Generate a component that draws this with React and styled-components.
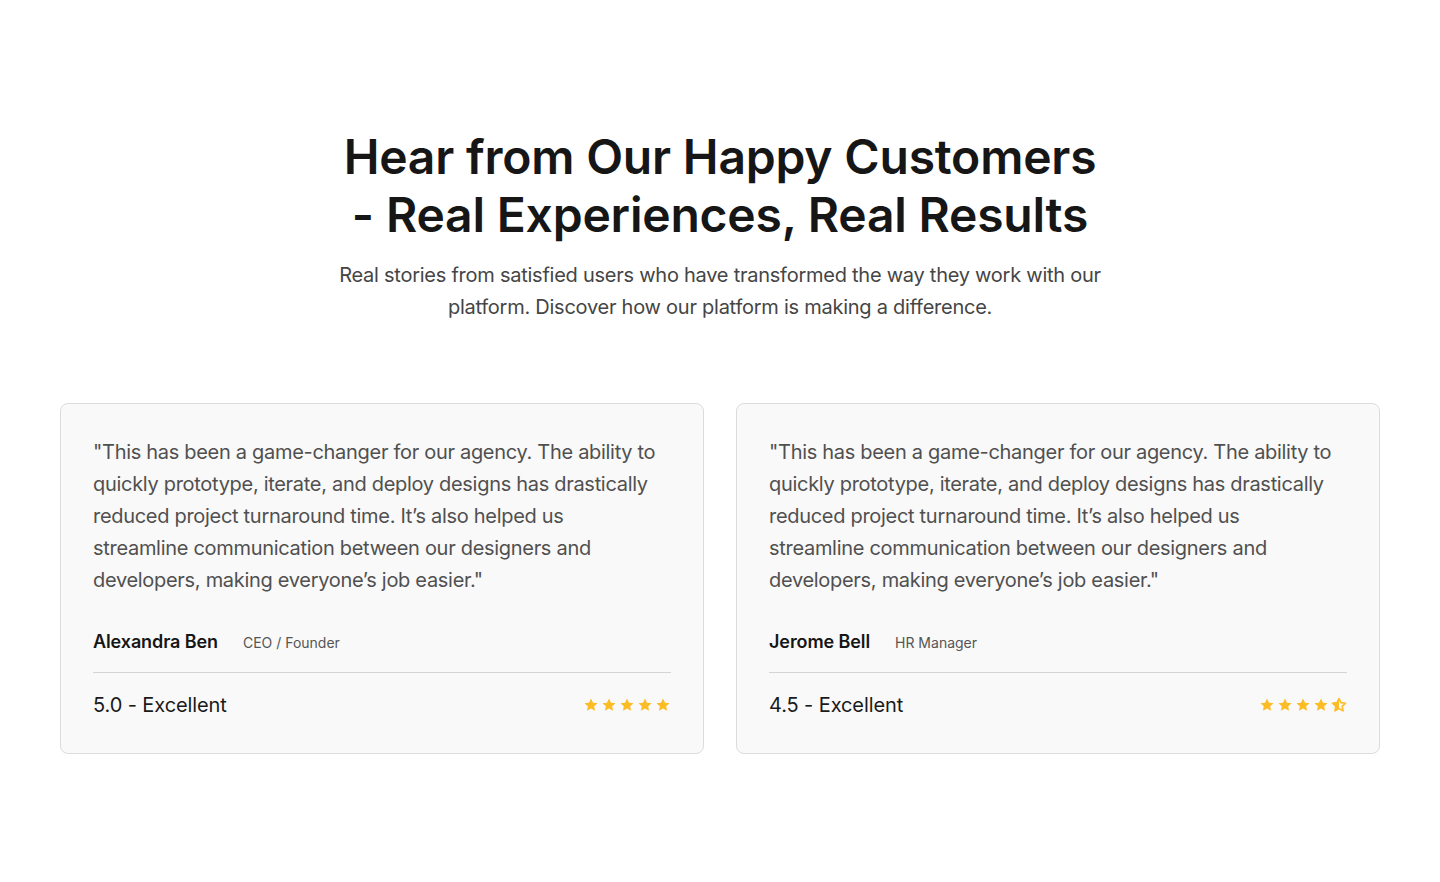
import styled, { createGlobalStyle } from "styled-components";

const GlobalStyle = createGlobalStyle`
    body {
        margin: 0;
        background: #ffffff;
        font-family: Inter, "Noto Sans", sans-serif;
        color: #1a1a1a;
    }
`;

const Section = styled.section`
    display: flex;
    flex-direction: column;
    align-items: center;
    padding: 128px 60px 128px;
`;

const Header = styled.header`
    display: flex;
    flex-direction: column;
    align-items: center;
    gap: 15px;
    text-align: center;
    margin-bottom: 80px;
`;

const Title = styled.h2`
    margin: 0;
    font-size: 48px;
    line-height: 58px;
    font-weight: 600;
    letter-spacing: -0.2px;
    color: #161616;
`;

const Subtitle = styled.p`
    margin: 0;
    font-size: 20px;
    line-height: 32px;
    letter-spacing: -0.25px;
    color: #454545;
`;

const CardGrid = styled.div`
    display: grid;
    grid-template-columns: 1fr 1fr;
    gap: 32px;
    width: 100%;
`;

const Card = styled.article`
    display: flex;
    flex-direction: column;
    padding: 32px;
    background: #f9f9f9;
    border: 1px solid #dcdcdc;
    border-radius: 8px;
`;

const Quote = styled.p`
    max-width: 566px;
    margin: 0 0 32px;
    font-size: 20px;
    line-height: 32px;
    letter-spacing: -0.3px;
    color: #505050;
`;

const Author = styled.div`
    display: flex;
    align-items: baseline;
    gap: 25px;
    padding-bottom: 16px;
    border-bottom: 1px solid #d4d4d8;
`;

const Name = styled.span`
    font-size: 18px;
    line-height: 28px;
    font-weight: 600;
    letter-spacing: -0.1px;
    color: #161616;
`;

const Role = styled.span`
    font-size: 14px;
    line-height: 20px;
    color: #555555;
`;

const RatingRow = styled.div`
    display: flex;
    align-items: center;
    justify-content: space-between;
    margin-top: 16px;
`;

const Score = styled.span`
    font-size: 20px;
    line-height: 32px;
    letter-spacing: -0.1px;
    color: #1a1a1a;
`;

const Stars = styled.div`
    display: flex;
    gap: 2px;
    color: #fbbc24;
`;

const STAR = "M12 2.2l2.95 6.3 6.85.8-5.1 4.7 1.4 6.8L12 17.4l-6.1 3.4 1.4-6.8-5.1-4.7 6.85-.8z";

function Star({ half }) {
    return (
        <svg width="16" height="16" viewBox="0 0 24 24">
            {half ? (
                <>
                    <defs>
                        <clipPath id="half-left">
                            <rect x="0" y="0" width="12" height="24" />
                        </clipPath>
                    </defs>
                    <path d={STAR} fill="none" stroke="currentColor" strokeWidth="2.4" strokeLinejoin="round" />
                    <path d={STAR} fill="currentColor" clipPath="url(#half-left)" />
                </>
            ) : (
                <path d={STAR} fill="currentColor" />
            )}
        </svg>
    );
}

const reviews = [
    { name: "Alexandra Ben", role: "CEO / Founder", score: 5 },
    { name: "Jerome Bell", role: "HR Manager", score: 4.5 },
];

const quote = "\"This has been a game-changer for our agency. The ability to quickly prototype, iterate, and deploy designs has drastically reduced project turnaround time. It\u2019s also helped us streamline communication between our designers and developers, making everyone\u2019s job easier.\"";

export default function App() {
    return (
        <>
            <GlobalStyle />
            <Section>
                <Header>
                    <Title>
                        Hear from Our Happy Customers
                        <br />
                        - Real Experiences, Real Results
                    </Title>
                    <Subtitle>
                        Real stories from satisfied users who have transformed the way they work with our
                        <br />
                        platform. Discover how our platform is making a difference.
                    </Subtitle>
                </Header>
                <CardGrid>
                    {reviews.map((r) => (
                        <Card key={r.name}>
                            <Quote>{quote}</Quote>
                            <Author>
                                <Name>{r.name}</Name>
                                <Role>{r.role}</Role>
                            </Author>
                            <RatingRow>
                                <Score>{r.score.toFixed(1)} - Excellent</Score>
                                <Stars>
                                    {[1, 2, 3, 4, 5].map((i) => (
                                        <Star key={i} half={r.score < i && r.score > i - 1} />
                                    ))}
                                </Stars>
                            </RatingRow>
                        </Card>
                    ))}
                </CardGrid>
            </Section>
        </>
    );
}
